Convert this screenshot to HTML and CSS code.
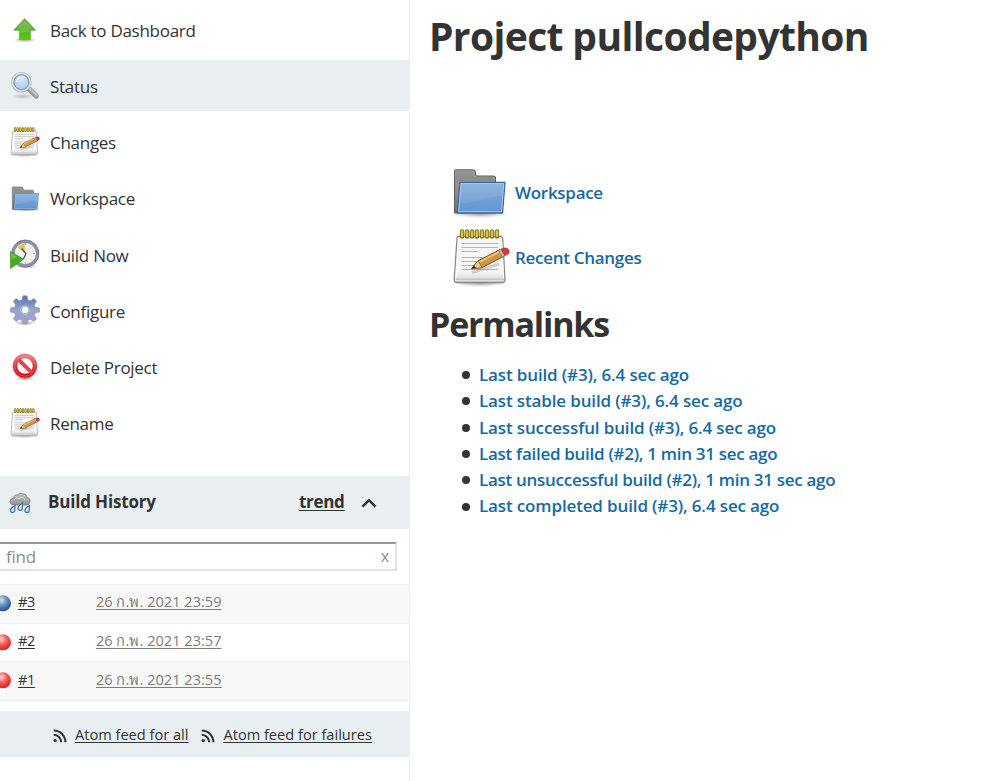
FILE: index.html
```html
<!DOCTYPE html>
<html lang="en">
<head>
<meta charset="utf-8">
<title>pullcodepython [Jenkins]</title>
<link rel="stylesheet" href="styles.css">
</head>
<body>
<svg class="defs" width="0" height="0" aria-hidden="true">
  <defs>
    <linearGradient id="gGreen" x1="0" y1="0" x2="0" y2="1"><stop offset="0" stop-color="#6aa84a"/><stop offset=".5" stop-color="#4fae1c"/><stop offset="1" stop-color="#55d000"/></linearGradient>
    <linearGradient id="gBlue" x1="0" y1="0" x2="0" y2="1"><stop offset="0" stop-color="#86aedd"/><stop offset=".5" stop-color="#739fd5"/><stop offset="1" stop-color="#6496d2"/></linearGradient>
    <linearGradient id="gGrey" x1="0" y1="0" x2="0" y2="1"><stop offset="0" stop-color="#a2a2a2"/><stop offset="1" stop-color="#747474"/></linearGradient>
    <linearGradient id="gPaper" x1="0" y1="0" x2="0" y2="1"><stop offset="0" stop-color="#f4f4f4"/><stop offset=".75" stop-color="#f7f7f7"/><stop offset="1" stop-color="#d4d4d4"/></linearGradient>
    <linearGradient id="gGear" x1="0" y1="0" x2="0" y2="1"><stop offset="0" stop-color="#5474ad"/><stop offset=".5" stop-color="#97a6ce"/><stop offset="1" stop-color="#a69cc8"/></linearGradient>
    <linearGradient id="gRed" x1="0" y1="0" x2="0" y2="1"><stop offset="0" stop-color="#e88080"/><stop offset=".5" stop-color="#d83038"/><stop offset="1" stop-color="#cf0a12"/></linearGradient>
    <radialGradient id="gLens" cx=".5" cy=".35" r=".65"><stop offset="0" stop-color="#d9e9fa"/><stop offset="1" stop-color="#a3c4ec"/></radialGradient>
    <radialGradient id="gBallBlue" cx=".4" cy=".3" r=".7"><stop offset="0" stop-color="#dbe4ea"/><stop offset=".45" stop-color="#6d94c4"/><stop offset="1" stop-color="#244f92"/></radialGradient>
    <radialGradient id="gBallRed" cx=".4" cy=".3" r=".7"><stop offset="0" stop-color="#ffd6d6"/><stop offset=".45" stop-color="#fb6263"/><stop offset="1" stop-color="#e01a20"/></radialGradient>
    <radialGradient id="gShade"><stop offset="0" stop-color="#000" stop-opacity=".35"/><stop offset="1" stop-color="#000" stop-opacity="0"/></radialGradient>
    <linearGradient id="gCloud" x1="0" y1="0" x2="0" y2="1"><stop offset="0" stop-color="#c8c8c6"/><stop offset="1" stop-color="#92928f"/></linearGradient>
  </defs>
  <symbol id="arrow-up" viewBox="0 0 30 30">
    <ellipse cx="15" cy="25" rx="12" ry="2.5" fill="url(#gShade)"/>
    <path d="M14.7 3.5 25.6 15.3H20.4V24.5H9.3V15.3H3.6Z" fill="url(#gGreen)" stroke="#6fa852" stroke-width=".8" stroke-linejoin="round"/>
    <path d="M14.7 5 23.2 14.3H19.4V18C16 15.500 13 17 10.300 18.500V14.300H6Z" fill="#fff" opacity=".18"/>
  </symbol>
  <symbol id="search" viewBox="0 0 30 30">
    <ellipse cx="13" cy="25.300" rx="11" ry="3" fill="url(#gShade)" opacity=".6"/>
    <path d="M19 18 26.300 25" stroke="#9a9a9a" stroke-width="5.200" stroke-linecap="round"/>
    <path d="M20 17.800 26.800 24.200" stroke="#c4c4c4" stroke-width="2.200" stroke-linecap="round"/>
    <circle cx="11.400" cy="11.200" r="8.800" fill="url(#gLens)" stroke="#b2b4b4" stroke-width="3"/>
    <circle cx="11.400" cy="11.200" r="8.800" fill="none" stroke="#dfe0de" stroke-width="1.600"/>
    <circle cx="11.400" cy="11.200" r="7.400" fill="none" stroke="#7898cb" stroke-width="1"/>
    <path d="M6.500 11C7 7 10 5.500 14 6" fill="none" stroke="#f0f7ff" stroke-width="1.300"/>
  </symbol>
  <symbol id="notepad" viewBox="0 0 58 58">
    <ellipse cx="28" cy="54" rx="28" ry="4" fill="url(#gShade)"/>
    <path d="M6.500 7.500H49Q50.500 7.500 50.700 9.500L53 50.500Q53.200 53.500 50 53.500H5Q2 53.500 2.200 50.500L5 9.500Q5 7.500 6.500 7.500Z" fill="url(#gPaper)" stroke="#8a8a8a" stroke-width="1.300"/>
    <path d="M6.500 9H49.500L51.600 51.500H3.700Z" fill="none" stroke="#fff" stroke-width="1"/>
    <path d="M3.600 50.500H52" stroke="#c4c4c4" stroke-width="2"/>
    <path d="M10 2.500V7.500M15 2.500V7.500M20 2.500V7.500M25 2.500V7.500M30 2.500V7.500M35 2.500V7.500M40 2.500V7.500M45 2.500V7.500" stroke="#82721a" stroke-width="4.400" stroke-linecap="round"/>
    <path d="M10 2.500V7M15 2.500V7M20 2.500V7M25 2.500V7M30 2.500V7M35 2.500V7M40 2.500V7M45 2.500V7" stroke="#d7c440" stroke-width="2.400" stroke-linecap="round"/>
    <path d="M9.500 14.500H46M9.500 18.500H46M9.500 22.500H26M9.500 28.500H46M9.500 32.500H40M9.500 36.500H32M9.500 40.500H46" stroke="#b4b4b4" stroke-width="1.200"/>
    <path d="M20 43.500 47 35" stroke="#777" stroke-width="3" opacity=".3"/>
    <path d="M19.500 39.800 26 31.800 48 20.600 52.500 27 30 38.600Z" fill="#cf963d" stroke="#76521c" stroke-width="1"/>
    <path d="M26.500 33.500 49 22" stroke="#eabf74" stroke-width="2"/>
    <path d="M19.500 39.800 26 31.800 30 38.600Z" fill="#ebcf9d" stroke="#8b642a" stroke-width=".8"/>
    <path d="M19.500 39.800 22.200 36.500 24 39Z" fill="#333"/>
    <path d="M46.300 21.500 49 20.200 53 26.600 50.400 28Z" fill="#b9b9b9" stroke="#777" stroke-width=".6"/>
    <path d="M49 20.200 52.500 19Q56 18.500 57 21.500 57.500 24 56 25L53 26.600Z" fill="#df3836" stroke="#a22" stroke-width=".7"/>
  </symbol>
  <symbol id="folder" viewBox="0 0 58 58">
    <ellipse cx="28" cy="46" rx="29" ry="4" fill="url(#gShade)"/>
    <path d="M2.500 45V3Q2.500 1.700 4 1.700H20Q23.500 1.700 23.500 4.500V6.200Q23.500 8 25.500 8H41.500Q43.500 8 43.500 10V45Z" fill="url(#gGrey)" stroke="#606060" stroke-width="1.100"/>
    <path d="M4 4H20M4 6H21M4 8H22M4 10H41M4 12H41" stroke="#707070" stroke-width=".8" opacity=".65"/>
    <path d="M7.900 14.300H53L50.500 45H5.300Z" fill="url(#gBlue)" stroke="#3768a8" stroke-width="1.300" stroke-linejoin="round"/>
    <path d="M9 15.500H51.700L49.500 43.700H6.700Z" fill="none" stroke="#a8c6e9" stroke-width="1"/>
    <path d="M9.500 16H51L50 28C35 28 26 35 8 35Z" fill="#fff" opacity=".09"/>
  </symbol>
  <symbol id="clock" viewBox="0 0 30 30">
    <ellipse cx="16" cy="27" rx="12" ry="3" fill="url(#gShade)"/>
    <circle cx="15.300" cy="14.600" r="12.200" fill="#f3f3ee" stroke="#8d8eae" stroke-width="3.200"/>
    <circle cx="15.300" cy="14.600" r="13.600" fill="none" stroke="#73758e" stroke-width=".7"/>
    <path d="M15 14.500 7.600 8.200Q10.300 5.300 14.700 4.600Z" fill="#e3bf4c"/>
    <path d="M11.500 9.500 16 14.500 13.500 20" fill="none" stroke="#555" stroke-width="1.300"/>
    <path d="M15.300 4V6M25 14.600H23M15.300 25V23M22 7.500 21 8.500M22 21.500 21 20.500" stroke="#aaa" stroke-width="1"/>
    <path d="M.5 12.500 13.500 20.300.5 29.500Z" fill="#45ae1d" stroke="#3a911c" stroke-width=".7"/>
    <path d="M1.200 14 7 17.500C5 19 3 20 1.200 20.500Z" fill="#8ecb72" opacity=".6"/>
  </symbol>
  <symbol id="gear" viewBox="0 0 30 30">
    <ellipse cx="15" cy="28" rx="11" ry="2.500" fill="url(#gShade)"/>
    <path fill-rule="evenodd" d="M12.800.8H17L17.800 4.800 20.300 5.800 23.800 3.500 26.600 6.300 24.300 9.800 25.200 12.300 29.500 13V17L25.200 17.900 24.200 20.200 26.600 23.700 23.800 26.500 20.300 24.200 17.800 25.200 17 29H12.800L12 25.200 9.600 24.200 6 26.500 3.300 23.700 5.600 20.200 4.600 17.900.4 17V13L4.600 12.300 5.600 9.800 3.300 6.300 6 3.500 9.600 5.800 12 4.800ZM15 11.300A3.700 3.700 0 1 0 15 18.700 3.700 3.700 0 1 0 15 11.300Z" fill="url(#gGear)" stroke="#8d99b8" stroke-width=".7"/>
    <circle cx="15" cy="15" r="4.300" fill="none" stroke="#c5cde2" stroke-width=".8"/>
  </symbol>
  <symbol id="forbid" viewBox="0 0 30 30">
    <ellipse cx="15" cy="26.500" rx="10" ry="2.500" fill="url(#gShade)"/>
    <circle cx="15" cy="14" r="10" fill="#fff" stroke="url(#gRed)" stroke-width="4.400"/>
    <path d="M8.300 7.300 21.700 20.700" stroke="#db484e" stroke-width="4"/>
    <circle cx="15" cy="14" r="12" fill="none" stroke="#dc7676" stroke-width=".7"/>
    <circle cx="15" cy="14" r="10.200" fill="none" stroke="#f08a8a" stroke-width=".8" opacity=".6"/>
  </symbol>
  <symbol id="rain" viewBox="0 0 24 24">
    <path d="M5.500 14Q1.500 13.700 2 10.300 2.500 7.500 5.500 7.300 6 3.300 9.500 4 11.500 1 15 3 19 2.800 18.800 6.600 22.500 7 22 10.800 21.500 14 18 14Z" fill="url(#gCloud)" stroke="#808080" stroke-width=".8"/>
    <path d="M6 9Q9 5 11 8 14 4 17 9" fill="none" stroke="#ddd" stroke-width="1"/>
    <g fill="#dfe9f6" stroke="#4374b8" stroke-width="1.300"><path d="M7 14.500Q2.500 17 2.500 19.400A2.100 2.100 0 0 0 6.700 19.400Z"/><path d="M14.500 12Q10 14.800 10 17.300A2.100 2.100 0 0 0 14.200 17.300Z"/><path d="M21.500 14.500Q17 17 17 19.400A2.100 2.100 0 0 0 21.200 19.400Z"/></g>
  </symbol>
  <symbol id="rss" viewBox="0 0 14 14">
    <circle cx="2.200" cy="11.600" r="1.700" fill="#333"/>
    <path d="M.7 5.800A7.400 7.400 0 0 1 8.100 13.300M.7 1.500A11.700 11.700 0 0 1 12.400 13.300" fill="none" stroke="#333" stroke-width="2"/>
  </symbol>
</svg>
<div class="page">
  <aside class="side">
    <nav class="tasks">
      <a class="task"><svg class="task-icon"><use href="#arrow-up"/></svg><span class="task-label">Back to Dashboard</span></a>
      <a class="task active"><svg class="task-icon"><use href="#search"/></svg><span class="task-label">Status</span></a>
      <a class="task"><svg class="task-icon"><use href="#notepad"/></svg><span class="task-label">Changes</span></a>
      <a class="task"><svg class="task-icon folder-icon"><use href="#folder"/></svg><span class="task-label">Workspace</span></a>
      <a class="task"><svg class="task-icon"><use href="#clock"/></svg><span class="task-label">Build Now</span></a>
      <a class="task"><svg class="task-icon"><use href="#gear"/></svg><span class="task-label">Configure</span></a>
      <a class="task"><svg class="task-icon forbid-icon"><use href="#forbid"/></svg><span class="task-label">Delete Project</span></a>
      <a class="task"><svg class="task-icon"><use href="#notepad"/></svg><span class="task-label">Rename</span></a>
    </nav>
    <section class="history">
      <header class="history-head">
        <svg class="rain-icon"><use href="#rain"/></svg>
        <h2 class="history-title">Build History</h2>
        <a class="trend">trend</a>
        <svg class="chevron" viewBox="0 0 16 10"><path d="M1.500 8.700 8 2.200 14.500 8.700" fill="none" stroke="#333" stroke-width="2.500"/></svg>
      </header>
      <div class="find"><span>find</span><span class="clear">x</span></div>
      <div class="builds">
        <div class="build odd"><svg class="ball" viewBox="0 0 12 18"><circle cx="3" cy="9.300" r="8" fill="url(#gBallBlue)"/></svg><a class="num">#3</a><a class="date">26 ก.พ. 2021 23:59</a></div>
        <div class="build"><svg class="ball" viewBox="0 0 12 18"><circle cx="3" cy="9.300" r="8" fill="url(#gBallRed)"/></svg><a class="num">#2</a><a class="date">26 ก.พ. 2021 23:57</a></div>
        <div class="build odd"><svg class="ball" viewBox="0 0 12 18"><circle cx="3" cy="9.300" r="8" fill="url(#gBallRed)"/></svg><a class="num">#1</a><a class="date">26 ก.พ. 2021 23:55</a></div>
      </div>
      <footer class="feeds">
        <svg class="rss"><use href="#rss"/></svg><a class="feed feed-all">Atom feed for all</a>
        <svg class="rss"><use href="#rss"/></svg><a class="feed">Atom feed for failures</a>
      </footer>
    </section>
  </aside>
  <main class="main">
    <h1 class="title">Project pullcodepython</h1>
    <div class="shortcuts">
      <a class="shortcut"><svg class="big-icon"><use href="#folder"/></svg><span class="label-workspace">Workspace</span></a>
      <a class="shortcut"><svg class="big-icon"><use href="#notepad"/></svg><span class="label-changes">Recent Changes</span></a>
    </div>
    <h2 class="subtitle">Permalinks</h2>
    <ul class="links">
      <li><a>Last build (#3), 6.4 sec ago</a></li>
      <li><a>Last stable build (#3), 6.4 sec ago</a></li>
      <li><a>Last successful build (#3), 6.4 sec ago</a></li>
      <li class="tight"><a>Last failed build (#2), 1 min 31 sec ago</a></li>
      <li class="tight"><a>Last unsuccessful build (#2), 1 min 31 sec ago</a></li>
      <li><a>Last completed build (#3), 6.4 sec ago</a></li>
    </ul>
  </main>
</div>
</body>
</html>
```
FILE: styles.css
```css
* { box-sizing: border-box; }
body {
  margin: 0;
  background: #fff;
  color: #333;
  font-family: "Open Sans", "Noto Sans", sans-serif;
}
.defs { display: block; position: absolute; }
.page { display: flex; height: 781px; overflow: hidden; }
.side { width: 410px; flex: none; border-right: 1px solid #eaeff2; }
.tasks { display: flex; flex-direction: column; gap: 5px; padding-top: 4px; height: 476px; }
.task {
  display: flex;
  align-items: center;
  gap: 10px;
  height: 51.150px;
  flex: none;
  padding-left: 10px;
  font-size: 17px;
  letter-spacing: -0.280px;
}
.task-label { padding-top: 2px; }
.active { background: #e9eef1; }
.task-icon { width: 30px; height: 30px; }
.folder-icon { margin: 6px -1px 0 1px; }
.forbid-icon { margin-top: 2px; }
.history-head { display: flex; align-items: center; height: 53px; padding-left: 8px; background: #e9eef1; }
.rain-icon { width: 24px; height: 24px; }
.history-title { margin: 0 0 2px 16px; width: 251px; font-size: 17px; font-weight: 700; letter-spacing: -0.170px; }
.trend { width: 62px; margin-bottom: 2px; font-size: 17px; font-weight: 700; letter-spacing: -0.300px; }
.chevron { width: 16px; height: 10px; }
.trend, .num, .date, .feed { text-decoration: underline; text-decoration-thickness: 1px; text-underline-offset: 2px; text-decoration-skip-ink: none; white-space: nowrap; }
.find {
  display: flex;
  align-items: center;
  justify-content: space-between;
  width: 397px;
  height: 29px;
  margin: 13px 0;
  padding: 0 6px;
  border: solid #e2e2e2;
  border-width: 2px 2px 2px 0;
  border-top-color: #979797;
  color: #8c8c8c;
  font-size: 17px;
  letter-spacing: -0.200px;
}
.clear { margin-bottom: 2px; font-size: 16px; }
.builds { border-top: 1px solid #e9eef1; }
.build { display: flex; align-items: center; height: 38.700px; border-bottom: 1px solid #e9eef1; font-size: 14.500px; }
.odd { background: #f8f8f8; }
.ball { width: 12px; height: 18px; margin: 0 6px 2px 0; }
.num { width: 78px; letter-spacing: -0.400px; }
.num, .date { margin-bottom: 4px; }
.date { color: #7d7d7d; letter-spacing: 0.050px; }
.feeds { display: flex; align-items: center; height: 46px; margin-top: 10px; padding-left: 53px; background: #e9eef1; font-size: 14.600px; }
.rss { width: 14px; height: 14px; margin-right: 8px; margin-top: 3px; }
.feed-all { margin-right: 13px; }
.main { padding-left: 19px; }
.title { margin: 9px 0 0; font-size: 39px; line-height: 54px; font-weight: 700; letter-spacing: -0.630px; }
.shortcuts { padding: 103px 0 0 23px; }
.shortcut { display: flex; align-items: center; gap: 5px; height: 61px; color: #156aa2; font-size: 17px; font-weight: 600; letter-spacing: -0.290px; }
.label-workspace { margin-bottom: 8px; }
.big-icon { width: 58px; height: 58px; }
.subtitle { margin: 14px 0 0; font-size: 34px; line-height: 44px; font-weight: 700; letter-spacing: -1.200px; }
.links { margin: 16px 0 0; padding-left: 33px; list-style: none; font-size: 17px; line-height: 26.300px; font-weight: 600; letter-spacing: -0.140px; }
.links li { display: flex; align-items: center; gap: 9px; }
.links li::before { content: ""; width: 8px; height: 8px; border-radius: 50%; background: #333; }
.links .tight { letter-spacing: -0.290px; }
.links a { color: #156aa2; }
```
